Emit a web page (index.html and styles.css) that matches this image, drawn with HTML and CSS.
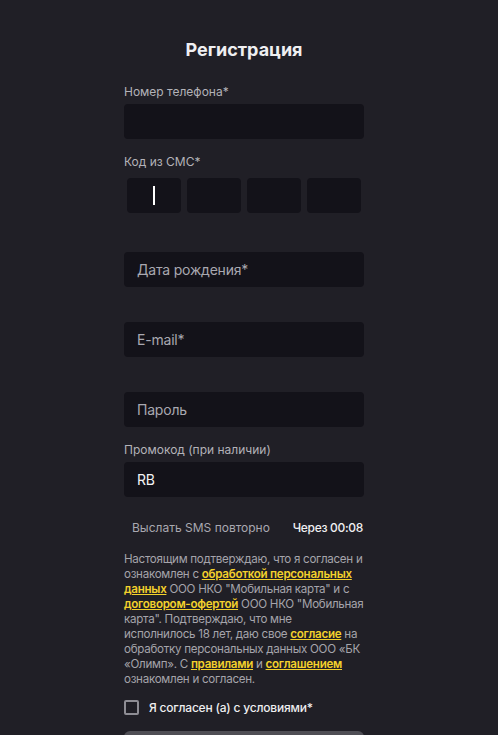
FILE: index.html
```html
<!DOCTYPE html>
<html lang="ru">
<head>
<meta charset="utf-8">
<title>Регистрация</title>
<link rel="stylesheet" href="styles.css">
</head>
<body>
<div class="page">
  <form class="form">
    <h1 class="title">Регистрация</h1>

    <div class="field">
      <label class="label">Номер телефона*</label>
      <div class="input"></div>
    </div>

    <div class="field">
      <label class="label">Код из СМС*</label>
      <div class="codes">
        <div class="code"><span class="caret"></span></div>
        <div class="code"></div>
        <div class="code"></div>
        <div class="code"></div>
      </div>
    </div>

    <div class="field">
      <label class="label"></label>
      <div class="input"><span class="placeholder">Дата рождения*</span></div>
    </div>

    <div class="field">
      <label class="label"></label>
      <div class="input"><span class="placeholder">E-mail*</span></div>
    </div>

    <div class="field">
      <label class="label"></label>
      <div class="input"><span class="placeholder">Пароль</span></div>
    </div>

    <div class="field">
      <label class="label">Промокод (при наличии)</label>
      <div class="input"><span class="value">RB</span></div>
    </div>

    <div class="resend">
      <span class="resend-link">Выслать SMS повторно</span>
      <span class="timer">Через 00:08</span>
    </div>

    <p class="terms">Настоящим подтверждаю, что я согласен и ознакомлен с <a class="link">обработкой персональных данных</a> ООО НКО "Мобильная карта" и с <a class="link">договором-офертой</a> ООО НКО "Мобильная карта". Подтверждаю, что мне исполнилось 18 лет, даю свое <a class="link">согласие</a> на обработку персональных данных ООО «БК «Олимп». С <a class="link">правилами</a> и <a class="link">соглашением</a> ознакомлен и согласен.</p>

    <div class="agree">
      <span class="checkbox"></span>
      <span class="agree-text">Я согласен (а) с условиями*</span>
    </div>

    <div class="submit"></div>
  </form>
</div>
</body>
</html>
```

FILE: styles.css
```css
html, body {
  margin: 0;
  padding: 0;
  background: #201f26;
  height: 100%;
  overflow: hidden;
}

body {
  font-family: Inter, "Noto Sans", sans-serif;
  color: #b4b3ba;
}

.page {
  padding-right: 10px;
}

.form {
  width: 240px;
  margin: 0 auto;
  padding-top: 38px;
  display: flex;
  flex-direction: column;
}

.title {
  margin: 0 0 22px;
  font-size: 18px;
  line-height: 24px;
  font-weight: 700;
  color: #efeff1;
  text-align: center;
}

.field {
  display: flex;
  flex-direction: column;
  gap: 4px;
  margin-bottom: 15px;
}

.label {
  display: block;
  height: 16px;
  font-size: 12px;
  line-height: 16px;
  color: #b3b2b8;
}

.input {
  height: 35px;
  background: #131219;
  border-radius: 4px;
  display: flex;
  align-items: center;
  padding: 0 14px 0 13px;
  font-size: 14px;
  letter-spacing: -0.2px;
}

.placeholder {
  color: #a9a8b0;
}

.value {
  color: #f2f2f4;
  font-weight: 400;
}

.codes {
  display: flex;
  gap: 6px;
  padding: 4px 3px;
}

.code {
  flex: 1;
  height: 35px;
  background: #131219;
  border-radius: 4px;
  display: flex;
  align-items: center;
  justify-content: center;
}

.caret {
  width: 1.5px;
  height: 19px;
  background: #ffffff;
}

.resend {
  display: flex;
  justify-content: space-between;
  padding: 8px 1px 0 8px;
  font-size: 12px;
  line-height: 16px;
}

.resend-link {
  color: #a9a8b0;
}

.timer {
  color: #f0f0f2;
  font-weight: 500;
  letter-spacing: -0.3px;
}

.terms {
  margin: 16px 0 0;
  font-size: 11.6px;
  line-height: 15px;
  letter-spacing: -0.28px;
  color: #a5a4ab;
}

.link {
  color: #f3d12c;
  text-decoration: underline;
  text-underline-offset: 1px;
  font-weight: 600;
}

.agree {
  display: flex;
  align-items: center;
  gap: 10px;
  margin-top: 12px;
  height: 16px;
}

.checkbox {
  width: 11px;
  height: 11px;
  border: 2px solid #8e8d94;
  border-radius: 2px;
}

.agree-text {
  font-size: 12px;
  color: #eeeef0;
  font-weight: 500;
  letter-spacing: -0.2px;
}

.submit {
  margin-top: 16px;
  height: 40px;
  border-radius: 6px;
  background: #4f4e55;
}
```
